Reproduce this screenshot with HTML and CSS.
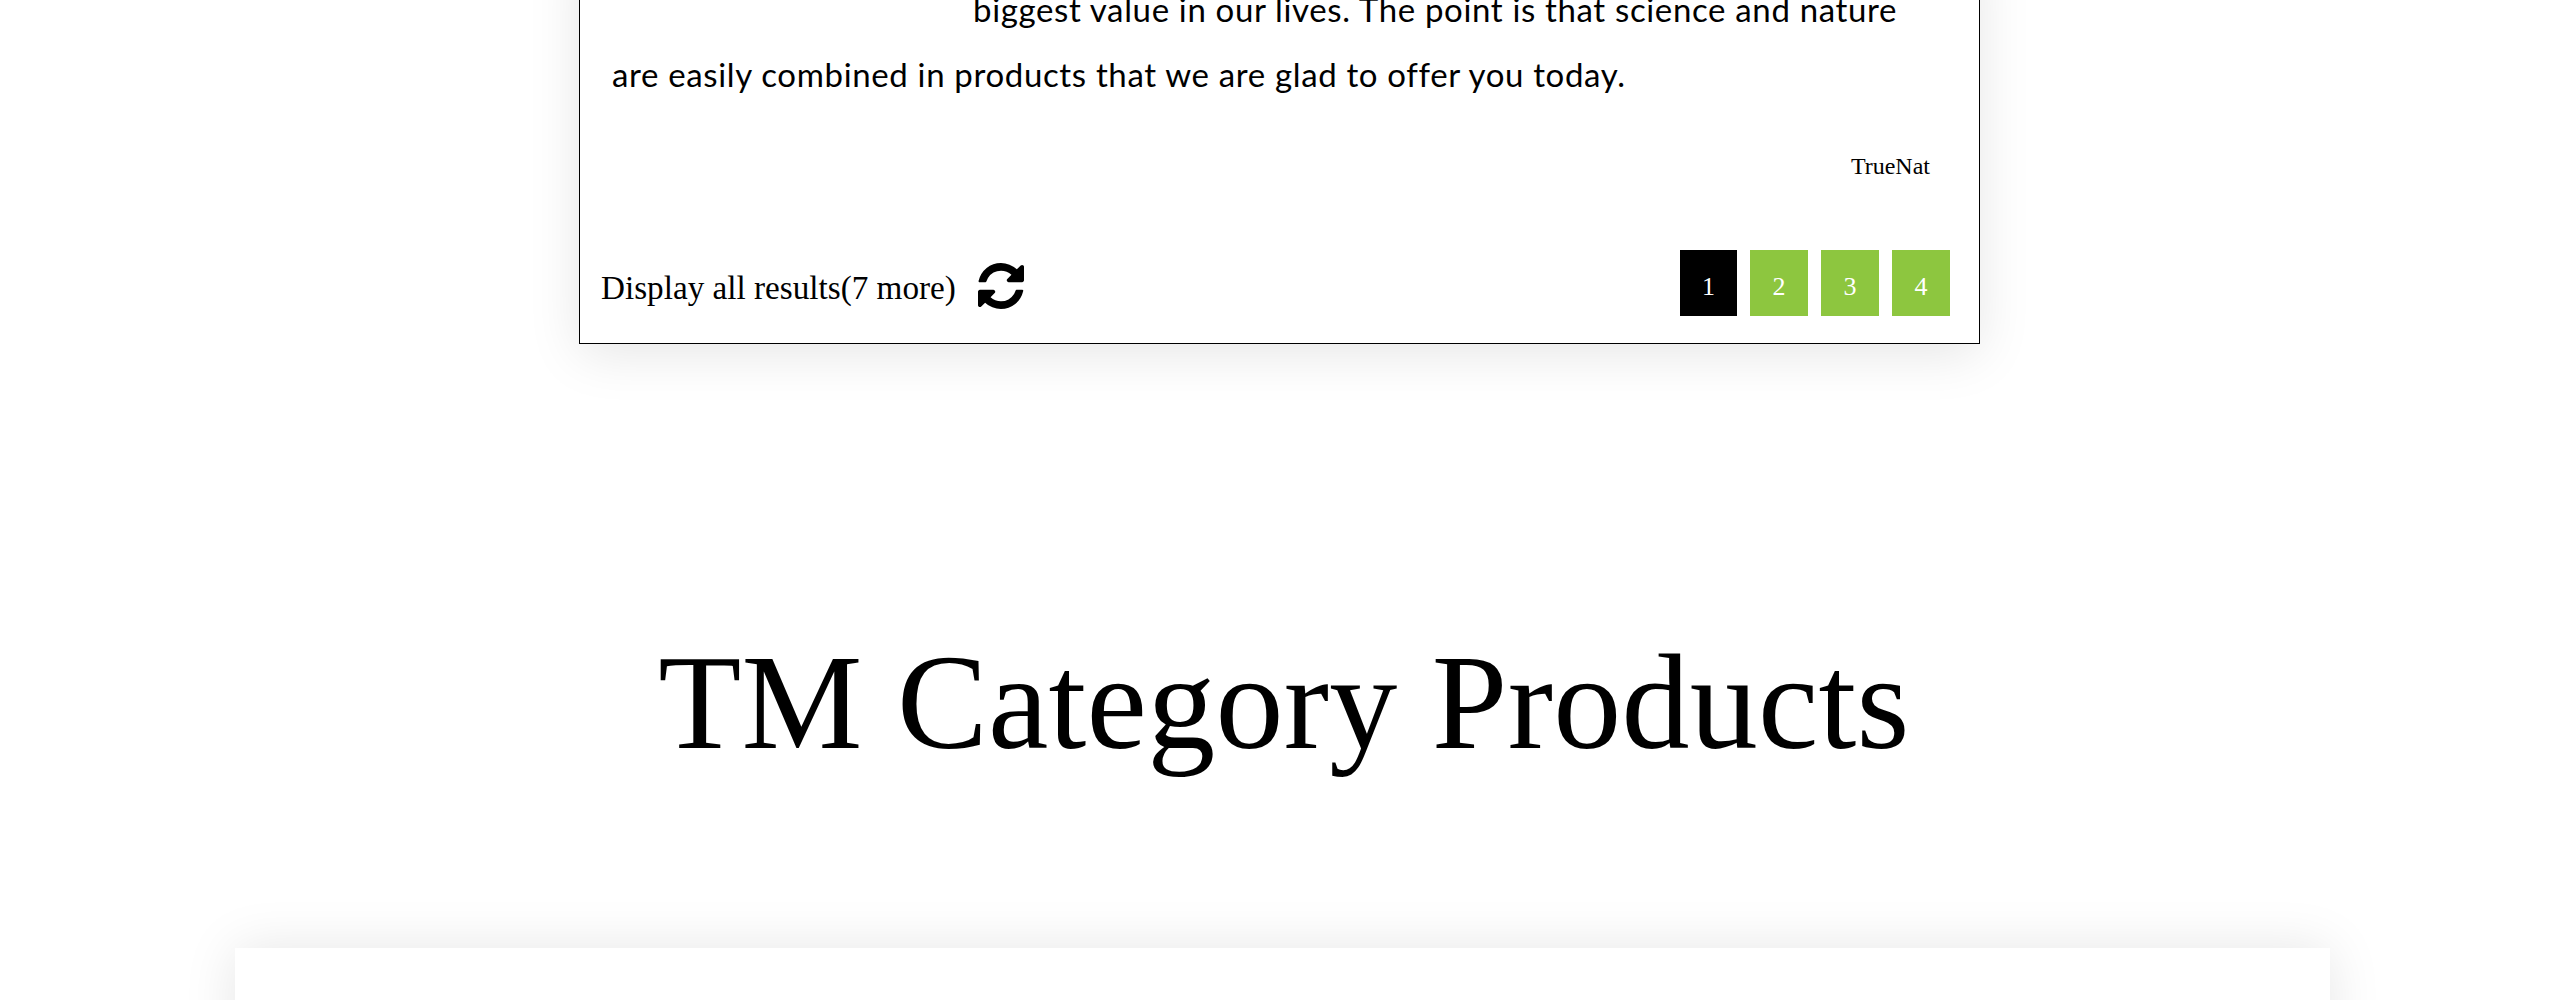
FILE: index.html
```html
<!DOCTYPE html>
<html lang="en">

<head>
    <meta charset="UTF-8" />
    <meta name="viewport" content="width=device-width, initial-scale=1.0" />
    <title>TM Category Products</title>
    <link rel="stylesheet" href="styles.css">
</head>

<body>
    <div class="testimonials">
        <p class="quote">biggest value in our lives. The point is that science and nature<br>are easily combined in products that we are glad to offer you today.</p>
        <p class="author">TrueNat</p>
        <div class="footer-row">
            <a class="more" href="#">
                Display all results(7 more)
                <svg class="refresh" viewBox="128 128 1536 1536" aria-hidden="true">
                    <path d="M1639 1056q0 5-1 7-64 268-268 434.5t-478 166.5q-146 0-282.5-55t-243.5-157l-129 129q-19 19-45 19t-45-19-19-45v-448q0-26 19-45t45-19h448q26 0 45 19t19 45-19 45l-137 137q71 66 161 102t187 36q134 0 250-65t186-179q11-17 53-117 8-23 30-23h192q13 0 22.5 9.5t9.5 22.5zm25-800v448q0 26-19 45t-45 19h-448q-26 0-45-19t-19-45 19-45l138-138q-148-137-349-137-134 0-250 65t-186 179q-11 17-53 117-8 23-30 23h-199q-13 0-22.5-9.5t-9.5-22.5v-7q65-268 270-434.5t480-166.5q146 0 284 55.5t245 156.5l130-129q19-19 45-19t45 19 19 45z" />
                </svg>
            </a>
            <div class="pages">
                <a class="page active" href="#">1</a>
                <a class="page" href="#">2</a>
                <a class="page" href="#">3</a>
                <a class="page" href="#">4</a>
            </div>
        </div>
    </div>

    <h1 class="section-title">TM Category Products</h1>

    <div class="products"></div>
</body>

</html>
```

FILE: styles.css
```css
html,
body {
    height: 1000px;
    overflow: hidden;
}

body {
    margin: 0;
    padding: 0;
    background-color: #fff;
    color: #000;
    font-family: "Liberation Serif", serif;
}

a {
    color: inherit;
    text-decoration: none;
}

.testimonials {
    box-sizing: border-box;
    width: 1401px;
    height: 400px;
    margin: -56px 0 0 579px;
    padding: 32px 29px 0 21px;
    border: 1px solid #000;
    background-color: #fff;
    box-shadow: 0 10px 50px rgba(0, 0, 0, 0.1);
}

.quote {
    margin: 0 0 0 11px;
    font-family: Lato, sans-serif;
    font-size: 33px;
    letter-spacing: 0.65px;
    line-height: 65px;
    text-indent: 361px;
}

.author {
    margin: 44px 20px 0 0;
    font-size: 24px;
    line-height: 30px;
    text-align: right;
}

.footer-row {
    display: flex;
    justify-content: space-between;
    align-items: flex-start;
    margin-top: 69px;
}

.more {
    box-sizing: border-box;
    display: flex;
    align-items: center;
    gap: 22px;
    height: 66px;
    padding-top: 10px;
    font-size: 33.2px;
}

.refresh {
    width: 46px;
    height: 46px;
    margin-top: -5px;
}

.pages {
    display: flex;
    gap: 13px;
}

.page {
    box-sizing: border-box;
    display: flex;
    justify-content: center;
    align-items: center;
    width: 58px;
    height: 66px;
    padding-top: 8px;
    background-color: #8dc63f;
    color: #fff;
    font-size: 26px;
}

.page.active {
    width: 57px;
    background-color: #000;
}

.section-title {
    margin: 0;
    padding: 278px 0 0 8px;
    font-size: 136px;
    font-weight: 400;
    letter-spacing: 0.25px;
    line-height: 160px;
    text-align: center;
}

.products {
    width: 2095px;
    height: 300px;
    margin: 166px 0 0 235px;
    background-color: #fff;
    box-shadow: 0 0 50px rgba(0, 0, 0, 0.1);
}
```
